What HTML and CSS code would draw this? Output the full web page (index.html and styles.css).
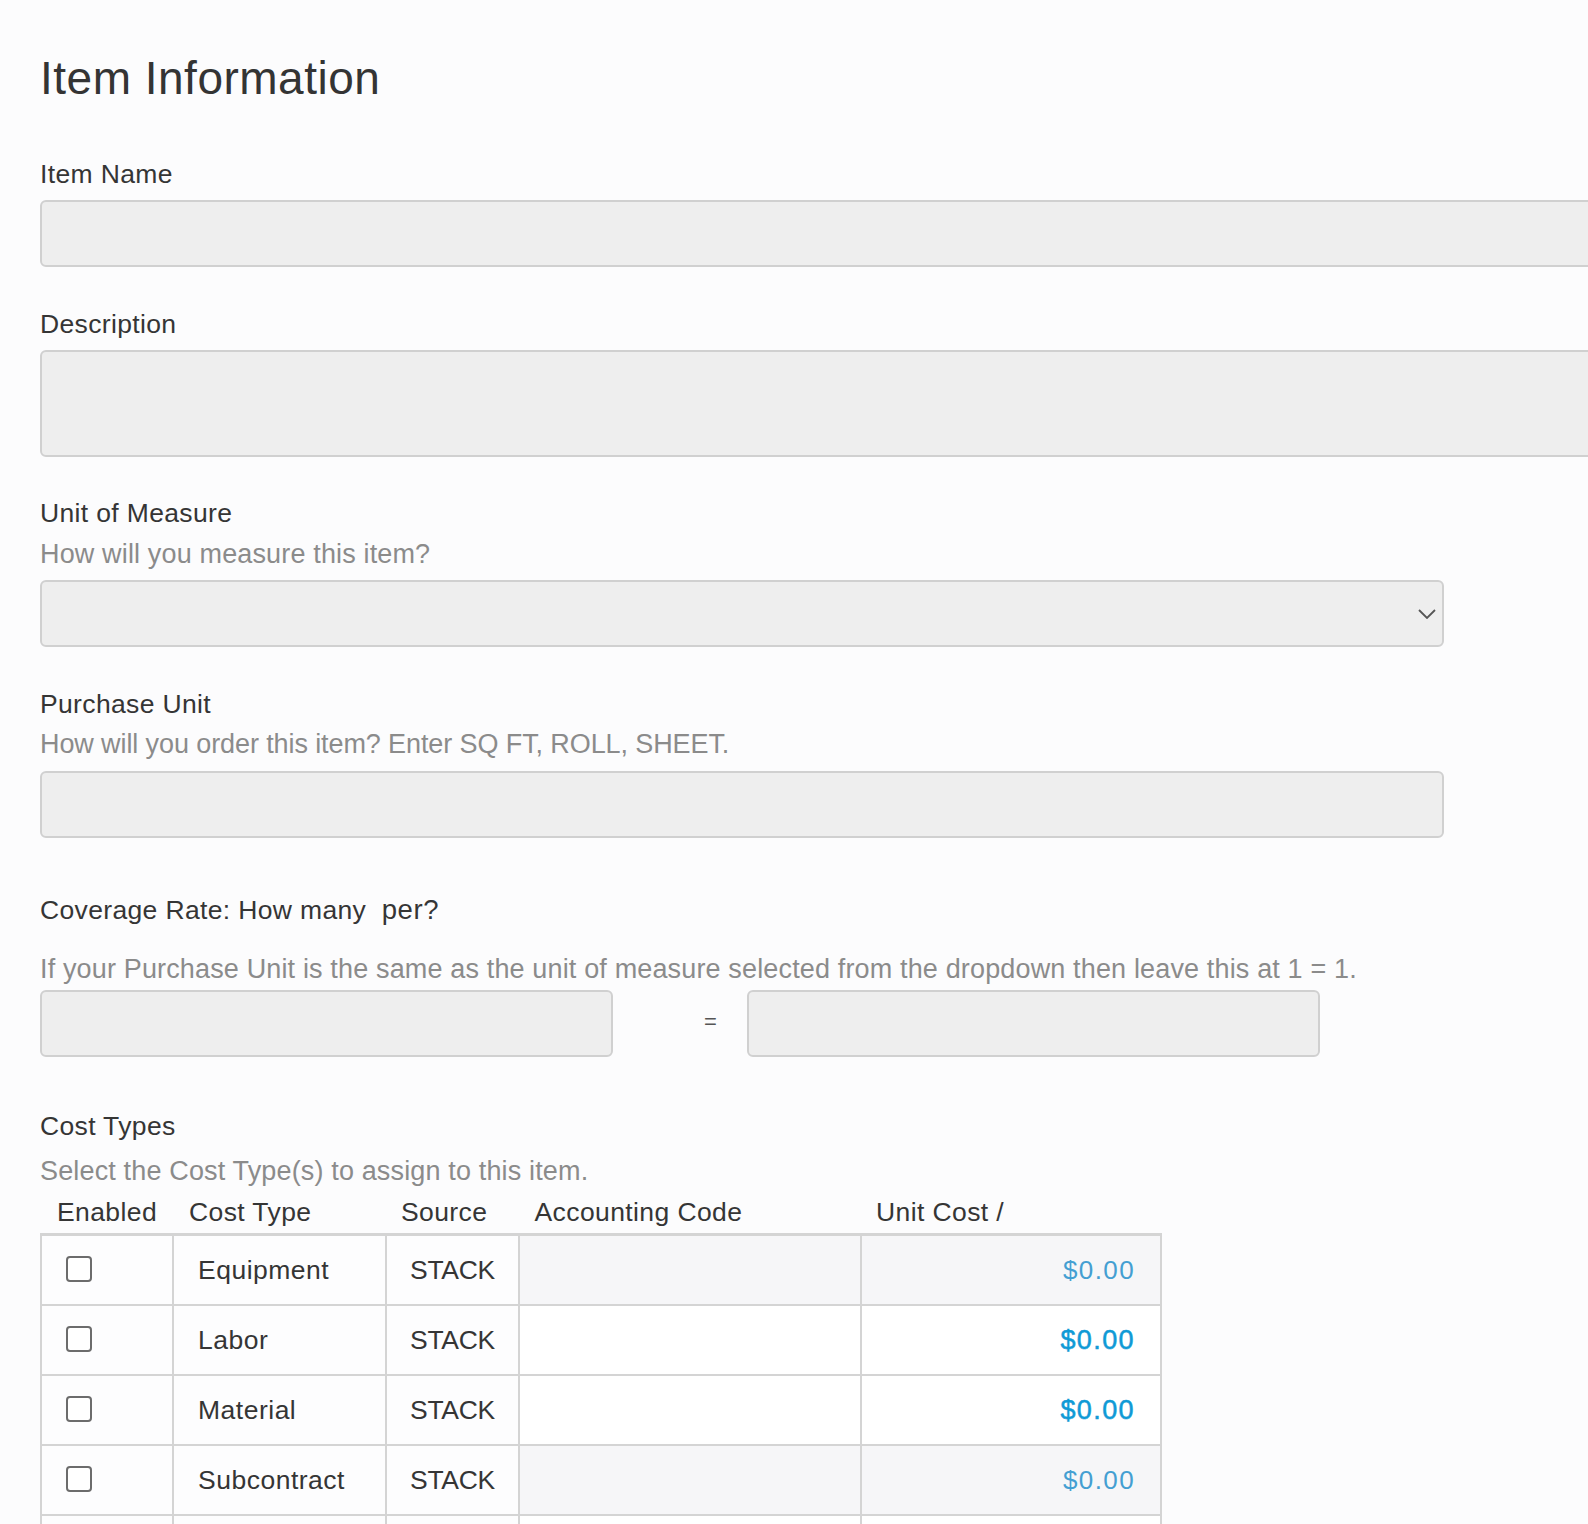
FILE: index.html
```html
<!DOCTYPE html>
<html lang="en">
<head>
<meta charset="utf-8">
<title>Item Information</title>
<link rel="stylesheet" href="styles.css">
</head>
<body>
<div class="page">
  <h1 class="title">Item Information</h1>

  <div class="field f-name">
    <div class="label">Item Name</div>
    <input class="control ctl-name full" type="text">
  </div>

  <div class="field f-desc">
    <div class="label">Description</div>
    <textarea class="control ctl-desc full"></textarea>
  </div>

  <div class="field f-uom">
    <div class="label">Unit of Measure</div>
    <div class="hint">How will you measure this item?</div>
    <div class="select-wrap">
      <select class="control ctl-select"><option></option></select>
      <svg class="chevron" width="18" height="10" viewBox="0 0 18 10"><path d="M1 1 L9 9 L17 1" fill="none" stroke="#555" stroke-width="1.8"/></svg>
    </div>
  </div>

  <div class="field f-pu">
    <div class="label">Purchase Unit</div>
    <div class="hint hint-pu">How will you order this item? Enter SQ FT, ROLL, SHEET.</div>
    <input class="control ctl-pu" type="text">
  </div>

  <div class="field f-cov">
    <div class="label">Coverage Rate: How many &nbsp;<span class="per">per?</span></div>
    <div class="hint hint-cov">If your Purchase Unit is the same as the unit of measure selected from the dropdown then leave this at 1 = 1.</div>
    <div class="cov-row">
      <input class="control ctl-half" type="text">
      <div class="equals">=</div>
      <input class="control ctl-half" type="text">
    </div>
  </div>

  <div class="field f-ct">
    <div class="label">Cost Types</div>
    <div class="hint hint-ct">Select the Cost Type(s) to assign to this item.</div>
    <div class="ct-head">
      <div class="h h1">Enabled</div>
      <div class="h h2">Cost Type</div>
      <div class="h h3">Source</div>
      <div class="h h4">Accounting Code</div>
      <div class="h h5">Unit Cost /</div>
    </div>
    <div class="ct-table">
      <div class="ct-row shaded">
        <div class="c c1"><span class="cb"></span></div>
        <div class="c c2">Equipment</div>
        <div class="c c3">STACK</div>
        <div class="c c4"></div>
        <div class="c c5"><span class="money">$0.00</span></div>
      </div>
      <div class="ct-row">
        <div class="c c1"><span class="cb"></span></div>
        <div class="c c2">Labor</div>
        <div class="c c3">STACK</div>
        <div class="c c4"></div>
        <div class="c c5"><span class="money strong">$0.00</span></div>
      </div>
      <div class="ct-row">
        <div class="c c1"><span class="cb"></span></div>
        <div class="c c2">Material</div>
        <div class="c c3">STACK</div>
        <div class="c c4"></div>
        <div class="c c5"><span class="money strong">$0.00</span></div>
      </div>
      <div class="ct-row shaded">
        <div class="c c1"><span class="cb"></span></div>
        <div class="c c2">Subcontract</div>
        <div class="c c3">STACK</div>
        <div class="c c4"></div>
        <div class="c c5"><span class="money">$0.00</span></div>
      </div>
      <div class="ct-row">
        <div class="c c1"></div>
        <div class="c c2"></div>
        <div class="c c3"></div>
        <div class="c c4"></div>
        <div class="c c5"></div>
      </div>
    </div>
  </div>
</div>
</body>
</html>
```

FILE: styles.css
```css
html, body {
  margin: 0;
  padding: 0;
  background: #fcfcfd;
  overflow: hidden;
}
body {
  width: 1588px;
  height: 1524px;
  font-family: "Liberation Sans", Arial, sans-serif;
  color: #353535;
}
.page {
  padding: 52px 0 0 40px;
}
.title {
  margin: 0;
  font-size: 46px;
  letter-spacing: 0.5px;
  line-height: 52px;
  font-weight: 400;
  color: #343434;
}
.label {
  font-size: 26.5px;
  letter-spacing: 0.35px;
  line-height: 32px;
  color: #353535;
  white-space: nowrap;
}
.hint {
  font-size: 27px;
  letter-spacing: 0.15px;
  line-height: 32px;
  color: #8b8b8b;
  margin-top: 8.5px;
  white-space: nowrap;
}
.hint-pu { letter-spacing: -0.1px; }
.control {
  display: block;
  box-sizing: border-box;
  height: 67px;
  background: #eeeeee;
  border: 2px solid #d0d0d0;
  border-radius: 6px;
  margin: 0;
  padding: 0 16px;
  font: inherit;
  outline: none;
  -webkit-appearance: none;
  appearance: none;
}
.full { width: 1620px; }

.f-name { margin-top: 54px; }
.ctl-name { margin-top: 10px; }

.f-desc { margin-top: 41px; }
.ctl-desc { margin-top: 10px; height: 107px; resize: none; }

.f-uom { margin-top: 40px; }
.select-wrap {
  position: relative;
  width: 1404px;
  margin-top: 10.5px;
}
.ctl-select { width: 1404px; }
.chevron {
  position: absolute;
  right: 8px;
  top: 29px;
}

.f-pu { margin-top: 40.5px; }
.ctl-pu { width: 1404px; margin-top: 11px; }

.f-cov { margin-top: 56.3px; }
.per { font-size: 27.5px; letter-spacing: 0.6px; }
.hint-cov { margin-top: 26.6px; }
.cov-row {
  display: flex;
  align-items: center;
  margin-top: 5.6px;
}
.ctl-half { width: 573px; }
.equals {
  width: 134px;
  box-sizing: border-box;
  padding-left: 91px;
  font-size: 22px;
  color: #555;
  margin-top: -3px;
}

.f-ct { margin-top: 52.5px; }
.hint-ct { margin-top: 13.4px; }

.ct-head {
  display: grid;
  grid-template-columns: 132px 213px 132.5px 342.5px 300px;
  width: 1122px;
  margin-top: 9.1px;
  font-size: 26.5px;
  letter-spacing: 0.4px;
  line-height: 32px;
  color: #353535;
}
.h { white-space: nowrap; }
.h1 { padding-left: 17px; }
.h2 { padding-left: 17px; }
.h3 { padding-left: 16px; }
.h4 { padding-left: 17px; }
.h5 { padding-left: 16px; }

.ct-table {
  width: 1122px;
  box-sizing: border-box;
  margin-top: 4.5px;
  border: 2px solid #d4d4d4;
  border-top-width: 3px;
  border-bottom: none;
}
.ct-row {
  display: grid;
  grid-template-columns: 130px 213px 132.5px 342.5px 300px;
  height: 70px;
  box-sizing: border-box;
  border-bottom: 2px solid #d4d4d4;
  background: #fdfdfe;
}
.c {
  display: flex;
  align-items: center;
  box-sizing: border-box;
  font-size: 26.5px;
  line-height: 32px;
  color: #353535;
  white-space: nowrap;
}
.c2, .c3, .c4, .c5 { border-left: 2px solid #d4d4d4; }
.c1 { padding-left: 24px; }
.c2 { padding-left: 24px; letter-spacing: 0.5px; }
.c3 { padding-left: 23px; letter-spacing: -0.3px; }
.c5 { justify-content: flex-end; padding-right: 25px; }
.ct-row.shaded .c4,
.ct-row.shaded .c5 { background: #f6f6f8; }
.ct-row:not(.shaded) .c4,
.ct-row:not(.shaded) .c5 { background: #ffffff; }

.cb {
  display: block;
  width: 26px;
  height: 26px;
  box-sizing: border-box;
  border: 2px solid #6c6c6c;
  border-radius: 4px;
  background: #fff;
  margin-top: -2px;
}
.money {
  font-size: 26px;
  letter-spacing: 1.4px;
  color: #449fd2;
}
.money.strong {
  font-size: 27px;
  color: #0f9ad6;
  -webkit-text-stroke: 0.5px #0f9ad6;
}
```
